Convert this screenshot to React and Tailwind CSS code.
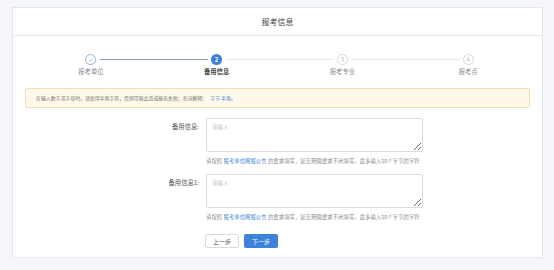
import React from "react";

const font = { fontFamily: '"Noto Sans CJK SC", "Noto Sans", sans-serif' };

function Step({ n, label, state, last }) {
  return (
    <div className="relative flex flex-col items-center">
      {!last && (
        <div
          className={`absolute top-[5px] left-[calc(50%+9px)] w-[calc(100%-18px)] h-px ${
            state === "done" ? "bg-[#7fa7c6]" : "bg-[#e6e8eb]"
          }`}
        />
      )}
      {state === "done" && (
        <div className="w-[11px] h-[11px] rounded-full border border-[#8fb4cf] flex items-center justify-center bg-white">
          <svg width="6" height="6" viewBox="0 0 10 10" fill="none">
            <path d="M2 5.2 L4.2 7.3 L8 3" stroke="#8fb4cf" strokeWidth="1.2" strokeLinecap="round" strokeLinejoin="round" />
          </svg>
        </div>
      )}
      {state === "active" && (
        <div className="w-[11px] h-[11px] rounded-full bg-[#3b7fd4] flex items-center justify-center text-white text-[6px] leading-none font-bold">
          {n}
        </div>
      )}
      {state === "todo" && (
        <div className="w-[11px] h-[11px] rounded-full border border-[#d4d6d9] flex items-center justify-center text-[#b5b8bc] text-[6px] leading-none bg-white">
          {n}
        </div>
      )}
      <div
        className={`mt-[2px] text-[6.3px] leading-[9px] ${
          state === "active" ? "text-[#444] font-semibold" : "text-[#8a8d92]"
        }`}
      >
        {label}
      </div>
    </div>
  );
}

function Field({ label }) {
  return (
    <div className="flex">
      <div className="w-[186px] text-right text-[6.3px] leading-[9px] text-[#555] pt-[4px]">{label}</div>
      <div className="ml-[7px] flex flex-col">
        <textarea
          placeholder="请输入"
          className="w-[217px] h-[34px] border border-[#d8dce2] rounded-[2px] bg-white px-[5px] py-[4px] text-[5.5px] leading-[8px] placeholder:text-[#c0c3c8] outline-none"
          style={font}
        />
        <div className="mt-[6px] text-[5.3px] leading-[7px] text-[#8a8d92] whitespace-nowrap tracking-[0.1px]">
          请按照 <span className="text-[#3b7fd4]">报考单位网报公告</span> 的要求填写，如无明确要求不用填写，最多输入50个字节的字符
        </div>
      </div>
    </div>
  );
}

export default function App() {
  return (
    <div className="w-[554px] h-[270px] bg-[#f4f6f9] pt-[7px] pl-[12px]" style={font}>
      <div className="w-[531px] h-[251px] bg-white border border-[#e3e6ea] flex flex-col">
        <div className="h-[28px] border-b border-[#e3e6ea] flex items-center justify-center text-[8px] text-[#444]">
          报考信息
        </div>
        <div className="ml-[15px] mr-[11px] mt-[18px] grid grid-cols-4">
          <Step n={1} label="报考单位" state="done" />
          <Step n={2} label="备用信息" state="active" />
          <Step n={3} label="报考专业" state="todo" />
          <Step n={4} label="报考点" state="todo" last />
        </div>
        <div className="mx-[12px] mt-[12px] h-[20px] bg-[#fdf8e9] border border-[#f2dfae] rounded-[2px] flex items-center pl-[10px] text-[4.9px] text-[#777] whitespace-nowrap">
          在输入数字或字母时，请使用半角字符，否则可能会造成报名失败；名词解释：
          <span className="text-[#3b7fd4] ml-[3px]">字节 半角</span>。
        </div>
        <div className="mt-[10px]">
          <Field label="备用信息:" />
        </div>
        <div className="mt-[9px]">
          <Field label="备用信息1:" />
        </div>
        <div className="mt-[13px] ml-[192px] flex gap-[5px]">
          <button className="w-[34px] h-[14px] border border-[#d8dce2] rounded-[2px] bg-white text-[6px] text-[#555] flex items-center justify-center">
            上一步
          </button>
          <button className="w-[34px] h-[14px] rounded-[2px] bg-[#3b82d8] text-[6px] text-white flex items-center justify-center">
            下一步
          </button>
        </div>
      </div>
    </div>
  );
}
